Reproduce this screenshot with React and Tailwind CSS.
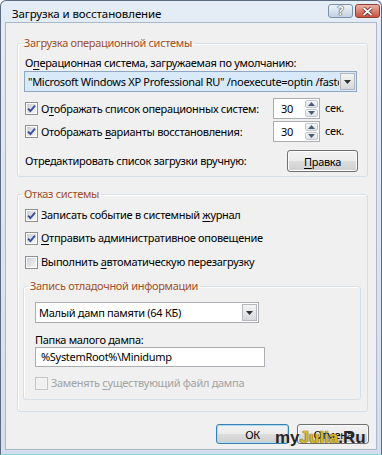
import React from 'react';

const U = ({ children }) => <span className="underline decoration-1 underline-offset-[2px]">{children}</span>;

const CheckBox = ({ checked, disabled }) => (
  <span
    className={`flex h-[13px] w-[13px] shrink-0 items-center justify-center border p-[1px] ${
      disabled ? 'border-[#c5c5c5] bg-[#f4f4f4]' : 'border-[#8e8f8f] bg-white'
    }`}
  >
    <span
      className={`flex h-full w-full items-center justify-center ${
        disabled ? 'bg-[#f0f0f0]' : 'bg-[linear-gradient(135deg,#cbcfd5,#f6f6f6)]'
      }`}
    >
      {checked && (
        <svg width="9" height="9" viewBox="0 0 9 9">
          <path d="M1 4.6 L3.4 7 L8 1.6" fill="none" stroke="#3b4d9a" strokeWidth="1.9" />
        </svg>
      )}
    </span>
  </span>
);

const Arrow = ({ up }) => (
  <svg width="7" height="4" viewBox="0 0 7 4">
    <path d={up ? 'M0 4 L3.5 0 L7 4Z' : 'M0 0 H7 L3.5 4Z'} fill="#4a5b78" />
  </svg>
);

const Spin = ({ value }) => (
  <div className="flex h-[21px] w-[47px] shrink-0 border border-[#abadb3] bg-white">
    <span className="flex-1 pl-[7px] leading-[19px]">{value}</span>
    <div className="flex w-[14px] flex-col gap-[1px] py-[1px] pr-[1px]">
      <span className="flex flex-1 items-center justify-center rounded-[2px] border border-[#c3c8d0] bg-[linear-gradient(#f7f7f7,#dfe2e6)]">
        <Arrow up />
      </span>
      <span className="flex flex-1 items-center justify-center rounded-[2px] border border-[#c3c8d0] bg-[linear-gradient(#f7f7f7,#dfe2e6)]">
        <Arrow />
      </span>
    </div>
  </div>
);

const Combo = ({ text, className, highlight }) => (
  <div
    className={`flex h-[21px] border ${
      highlight ? 'border-[#8ea7c2] bg-[#d8eaf9]' : 'border-[#abadb3] bg-white'
    } ${className}`}
  >
    <span className="flex-1 overflow-hidden whitespace-nowrap pl-[3px] leading-[19px]">{text}</span>
    <span className="m-[1px] flex w-[15px] items-center justify-center border border-[#b3b7bd] bg-[linear-gradient(#f4f4f4,#d6d8db)]">
      <svg width="7" height="4" viewBox="0 0 7 4">
        <path d="M0 0 H7 L3.5 4Z" fill="#333" />
      </svg>
    </span>
  </div>
);

const Group = ({ title, className = '', bodyClass = '', children }) => (
  <fieldset className={`rounded-[3px] border border-[#d5dfe5] shadow-[inset_1px_1px_0_#fff] ${className}`}>
    <legend className="ml-[4px] px-[2px] leading-[16px] text-[#a24e26]">{title}</legend>
    <div className={`flex flex-col ${bodyClass}`}>{children}</div>
  </fieldset>
);

const Btn = ({ children, focused, className = '' }) => (
  <button
    className={`flex h-[20px] items-center justify-center rounded-[3px] border bg-[linear-gradient(#f2f2f2_0%,#ebebeb_50%,#dddddd_50%,#cfcfcf_100%)] leading-none ${
      focused ? 'border-[#3c7fb1] shadow-[inset_0_0_0_1px_#a8dcf2]' : 'border-[#707070] shadow-[inset_0_0_0_1px_#fafafa]'
    } ${className}`}
  >
    {children}
  </button>
);

const CheckRow = ({ checked, disabled, children, className = '' }) => (
  <label className={`flex items-center gap-[3px] leading-[16px] ${disabled ? 'text-[#a3a3a3]' : ''} ${className}`}>
    <CheckBox checked={checked} disabled={disabled} />
    <span className="whitespace-nowrap">{children}</span>
  </label>
);

export default function App() {
  return (
    <div className="h-[455px] w-[382px] overflow-hidden bg-white font-['Noto_Sans',sans-serif] text-[11px] tracking-[-0.3px] text-black">
      <div className="relative flex h-[455px] flex-col rounded-t-[6px] border border-[#5b6c80] border-b-[#8ad2e2] bg-[linear-gradient(#e4ecf5,#d3dfeb)]">
        <div className="flex h-[21px] shrink-0 items-start justify-between">
          <span className="pl-[11px] pt-[5px] text-[11.5px] leading-[16px] tracking-[-0.1px]">Загрузка и восстановление</span>
          <div className="flex gap-[2px] pr-[1px] pt-[3px]">
            <span className="flex h-[14px] w-[25px] items-center justify-center rounded-[3px] border border-[#7d8fa6] bg-[linear-gradient(#eef3f8,#c3d1e1)] text-[12px] font-bold leading-none text-white [text-shadow:0_0_1px_#2f3c52,0_0_1px_#2f3c52,0_0_1px_#2f3c52]">
              ?
            </span>
            <span className="flex h-[14px] w-[25px] items-center justify-center rounded-[3px] border border-[#8e3f33] bg-[linear-gradient(#eab0a4,#c8513d)]">
              <svg width="11" height="9" viewBox="0 0 11 9">
                <path d="M1.5 1 L9.5 8 M9.5 1 L1.5 8" stroke="#5a2219" strokeWidth="3.4" />
                <path d="M1.5 1 L9.5 8 M9.5 1 L1.5 8" stroke="#fff" strokeWidth="1.8" />
              </svg>
            </span>
          </div>
        </div>

        <div className="mx-[4px] mb-[4px] flex flex-1 flex-col border border-[#a9b9ca] bg-[#f0f0f0] pl-[11px] pr-[8px]">
          <Group title="Загрузка операционной системы" className="mt-[12px]" bodyClass="px-[7px] pb-[4px]">
            <span className="mt-[4px] leading-[16px]">
              О<U>п</U>ерационная система, загружаемая по умолчанию:
            </span>
            <Combo
              highlight
              className="-ml-[1px] w-[333px]"
              text={'"Microsoft Windows XP Professional RU" /noexecute=optin /fastdetect'}
            />
            <div className="mt-[6px] flex items-center">
              <CheckRow checked className="w-[248px]">
                О<U>т</U>ображать список операционных систем:
              </CheckRow>
              <Spin value="30" />
              <span className="ml-[5px]">сек.</span>
            </div>
            <div className="mt-[2px] flex items-center">
              <CheckRow checked className="w-[248px]">
                Отображать <U>в</U>арианты восстановления:
              </CheckRow>
              <Spin value="30" />
              <span className="ml-[5px]">сек.</span>
            </div>
            <div className="mt-[8px] flex items-center">
              <span className="w-[262px]">Отредактировать список загрузки вручную:</span>
              <Btn className="h-[22px] w-[71px]">
                <U>П</U>равка
              </Btn>
            </div>
          </Group>

          <Group title="Отказ системы" className="mt-[9px]" bodyClass="px-[7px] pb-[11px]">
            <CheckRow checked className="mt-[5px]">
              Записать событие в системный <U>ж</U>урнал
            </CheckRow>
            <CheckRow checked className="mt-[7px]">
              <U>О</U>тправить административное оповещение
            </CheckRow>
            <CheckRow className="mt-[8px]">
              Выполнить <U>а</U>втоматическую перезагрузку
            </CheckRow>

            <Group
              title="Запись отладочной информации"
              className="-ml-[2px] -mr-[1px] mt-[8px]"
              bodyClass="px-[11px] pb-[8px]"
            >
              <Combo className="mt-[8px] w-[224px]" text="Малый дамп памяти (64 КБ)" />
              <span className="mt-[10px] leading-[14px]">Папка малого дампа:</span>
              <div className="h-[20px] w-[230px] border border-[#abadb3] bg-white pl-[5px] leading-[18px]">
                %SystemRoot%\Minidump
              </div>
              <CheckRow disabled className="mt-[8px]">
                Заменять <U>с</U>уществующий файл дампа
              </CheckRow>
            </Group>
          </Group>

          <div className="-mr-[1px] mt-[12px] flex justify-end gap-[8px]">
            <Btn focused className="w-[73px]">
              ОК
            </Btn>
            <Btn className="w-[72px]">Отмена</Btn>
          </div>
        </div>

        <div className="absolute left-[274px] top-[427px] font-['Liberation_Sans',sans-serif] text-[17px] font-bold leading-[20px] tracking-normal">
          <span className="text-[#262626]">my</span>
          <span className="text-[#d8b82a] [text-shadow:0_0_1px_#5e4f0c,0_0_1px_#5e4f0c]">Julia</span>
          <span className="text-[#262626]">.Ru</span>
        </div>
      </div>
    </div>
  );
}
